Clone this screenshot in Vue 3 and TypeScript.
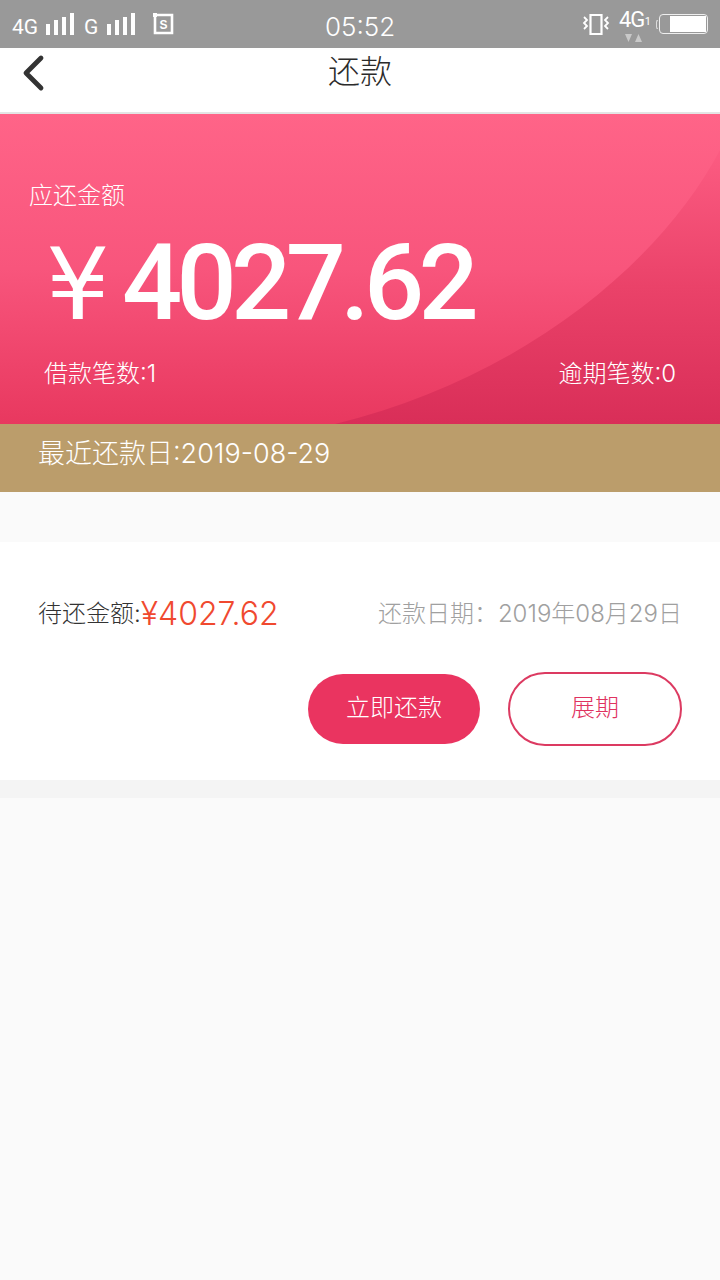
<script setup lang="ts">
const title = '还款'
</script>

<template>
  <div class="page">
    <div class="status">
      <div class="st-left">
        <span class="net">4G</span>
        <svg class="bars" width="30" height="24" viewBox="0 0 30 24"><path d="M1 12h4v11H1zM9 8h4v15H9zM17 5h4v18h-4zM25 1h4v22h-4z" fill="#fff"/></svg>
        <span class="net g">G</span>
        <svg class="bars" width="30" height="24" viewBox="0 0 30 24"><path d="M1 12h4v11H1zM9 8h4v15H9zM17 5h4v18h-4zM25 1h4v22h-4z" fill="#fff"/></svg>
        <svg class="sim" width="22" height="22" viewBox="0 0 22 22">
          <path d="M3 2h17v18H3z" fill="none" stroke="#fff" stroke-width="2.6"/>
          <path d="M1 0h4v4H1z" fill="#fff"/>
          <text x="11.5" y="15.5" text-anchor="middle" class="sim-s">S</text>
        </svg>
      </div>
      <span class="time">05:52</span>
      <div class="st-right">
        <svg width="28" height="24" viewBox="0 0 28 24" fill="none" stroke="#fff">
          <path d="M8.5 3h11v19h-11z" stroke-width="2.2"/>
          <path d="M2 5l3 3-3 3 3 3-3 3M26 5l-3 3 3 3-3 3 3 3" stroke-width="1.8"/>
        </svg>
        <div class="lte">
          <span class="lte-t">4G</span><span class="lte-n">1</span>
          <svg class="arrows" width="20" height="9" viewBox="0 0 20 9"><path d="M1 1h7L4.500 9zM11 9h7l-3.500-8z" fill="#c9c9c9"/></svg>
        </div>
        <div class="batt-wrap">
          <div class="batt"><div class="batt-fill"></div></div>
        </div>
      </div>
    </div>

    <header class="nav">
      <svg class="back" width="26" height="38" viewBox="0 0 26 38"><path d="M22 4L7 19l15 15" fill="none" stroke="#333" stroke-width="4.800" stroke-linecap="round" stroke-linejoin="round"/></svg>
      <h1 class="title">{{ title }}</h1>
    </header>

    <section class="hero">
      <svg class="arc" width="720" height="310" viewBox="0 0 720 310">
        <defs>
          <linearGradient id="arcg" gradientUnits="userSpaceOnUse" x1="0" y1="36" x2="0" y2="310">
            <stop offset="0" stop-color="#fc5c82"/>
            <stop offset="0.5" stop-color="#ea4269"/>
            <stop offset="1" stop-color="#d92e58"/>
          </linearGradient>
        </defs>
        <path d="M720 36C660 150 520 265 335 310H720z" fill="url(#arcg)"/>
      </svg>
      <div class="hero-label">应还金额</div>
      <div class="hero-amount"><span class="yen">¥</span>4027.62</div>
      <div class="hero-row"><span>借款笔数:1</span><span>逾期笔数:0</span></div>
    </section>

    <div class="recent">最近还款日:2019-08-29</div>

    <section class="card">
      <div class="card-row">
        <div class="due"><span class="due-l">待还金额:</span><span class="due-v">¥4027.62</span></div>
        <div class="date">还款日期：2019年08月29日</div>
      </div>
      <div class="actions">
        <button class="btn primary">立即还款</button>
        <button class="btn outline">展期</button>
      </div>
    </section>
    <div class="strip"></div>
  </div>
</template>

<style>
html, body { margin: 0; background: #fafafa; }
</style>

<style scoped>
.page {
  width: 720px;
  height: 1280px;
  overflow: hidden;
  background: #fafafa;
  font-family: "Inter", "Noto Sans CJK SC", sans-serif;
  font-weight: 300;
}
.status {
  height: 48px;
  background: #999;
  display: grid;
  grid-template-columns: 1fr auto 1fr;
  align-items: center;
  color: #fff;
  padding: 0 12px;
  box-sizing: border-box;
}
.st-left { display: flex; align-items: center; }
.net { font: 400 21px "Roboto", sans-serif; margin-top: 6px; width: 33px; }
.net.g { width: 22px; margin-left: 9px; }
.sim { margin-left: 16px; margin-top: -1px; }
.sim-s { font: 700 12px "Liberation Sans", sans-serif; fill: #fff; }
.time { font: 300 26px "Inter", sans-serif; margin-top: 4px; }
.st-right { display: flex; align-items: center; justify-content: flex-end; gap: 9px; }
.lte { position: relative; width: 38px; height: 40px; }
.lte-t { position: absolute; left: 0; top: 3px; font: 400 22px "Roboto", sans-serif; letter-spacing: -1px; }
.lte-n { position: absolute; right: 6px; top: 11px; font: 400 11px "Roboto", sans-serif; }
.arrows { position: absolute; left: 5px; top: 29px; }
.batt-wrap { position: relative; margin-left: -7px; }
.batt-wrap::before {
  content: "";
  position: absolute;
  left: -3px;
  top: 6px;
  width: 2px;
  height: 9px;
  border: 1px solid #ddd;
  border-right: 0;
  border-radius: 2px 0 0 2px;
  box-sizing: border-box;
}
.batt {
  width: 45px;
  height: 16px;
  border: 1.500px solid #eee;
  border-radius: 4px;
  display: flex;
  justify-content: flex-end;
  padding: 1px;
}
.batt-fill { width: 36px; background: #fff; }
.nav {
  height: 66px;
  background: #fff;
  border-bottom: 2px solid #e4e4e4;
  box-sizing: border-box;
  position: relative;
  display: flex;
  justify-content: center;
}
.back { position: absolute; left: 19px; top: 6px; }
.title {
  margin: 0;
  font-size: 32px;
  line-height: 48px;
  font-weight: 300;
  color: #2b2b2b;
}
.hero {
  position: relative;
  height: 310px;
  background: linear-gradient(180deg, #ff6488 0%, #f8557c 50%, #e8385f 100%);
  color: #fff;
  padding: 66px 44px 0 44px;
  box-sizing: border-box;
}
.arc { position: absolute; left: 0; top: 0; }
.hero-label, .hero-amount, .hero-row { position: relative; }
.hero-label { font-size: 24px; line-height: 32px; margin-left: -15px; }
.hero-amount {
  font: 500 106px/112px "Roboto", "Liberation Sans", sans-serif;
  font-kerning: none;
  letter-spacing: -5.700px;
  margin-top: 15px;
  display: flex;
  align-items: baseline;
}
.yen {
  width: 78px;
  padding-left: 2px;
  box-sizing: border-box;
  letter-spacing: 0;
  font: 400 100px/112px "DejaVu Sans", sans-serif;
}
.hero-row {
  display: flex;
  justify-content: space-between;
  font-size: 24px;
  line-height: 36px;
  margin-top: 15px;
}
.recent {
  height: 68px;
  background: #bb9d6b;
  color: #fff;
  font-size: 27px;
  line-height: 60px;
  padding-left: 38px;
}
.card {
  margin-top: 50px;
  height: 238px;
  background: #fff;
  padding: 48px 38px 0;
  box-sizing: border-box;
}
.card-row { display: flex; justify-content: space-between; align-items: center; height: 48px; }
.due { display: flex; align-items: center; line-height: 40px; }
.due-l { font-size: 24px; color: #333; }
.due-v { font-size: 32px; color: #f0492f; }
.date { font-size: 24px; color: #a0a0a0; margin-bottom: 6px; }
.actions { display: flex; justify-content: flex-end; gap: 28px; margin-top: 34px; align-items: center; }
.btn {
  width: 172px;
  height: 70px;
  border-radius: 35px;
  font-family: inherit;
  font-weight: 300;
  font-size: 24px;
  line-height: 28px;
  padding: 0 0 2px;
  box-sizing: border-box;
}
.primary { background: #ea3460; color: #fff; border: 0; }
.outline { width: 174px; height: 74px; border-radius: 37px; background: #fff; color: #e0325f; border: 2px solid #dc3a61; }
.strip { height: 18px; background: #f4f4f4; }
</style>
